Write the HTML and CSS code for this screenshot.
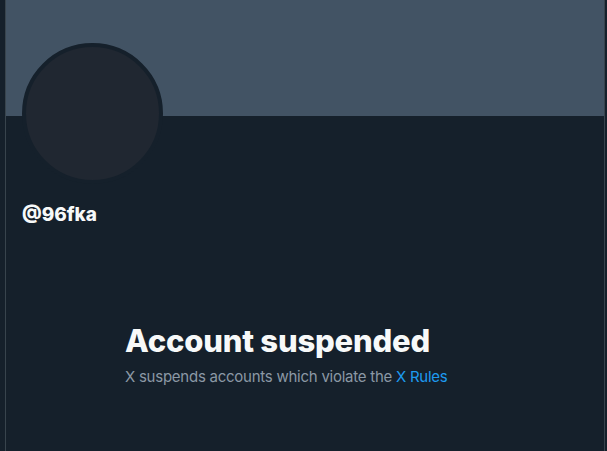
FILE: index.html
```html
<!DOCTYPE html>
<html lang="en">
<head>
    <meta charset="UTF-8">
    <meta name="viewport" content="width=device-width, initial-scale=1.0">
    <title>@96fka</title>
    <link rel="stylesheet" href="styles.css">
</head>
<body>
    <div class="column">
        <div class="banner"></div>
        <div class="profile">
            <div class="avatar"></div>
            <div class="handle">@96fka</div>
        </div>
        <div class="empty-state">
            <h1 class="title">Account suspended</h1>
            <p class="subtitle">X suspends accounts which violate the <a href="#">X Rules</a></p>
        </div>
    </div>
</body>
</html>
```

FILE: styles.css
```css
body {
    margin: 0;
    background: #15202b;
    font-family: Inter, "Noto Sans", sans-serif;
    color: #f7f9f9;
}
.column {
    width: 598px;
    height: 451px;
    margin-left: 5px;
    border-left: 1px solid #38444d;
    border-right: 1px solid #38444d;
    overflow: hidden;
}
.banner {
    height: 116px;
    background: #425364;
}
.profile {
    padding: 0 16px;
}
.avatar {
    width: 133px;
    height: 133px;
    margin-top: -73px;
    border: 4px solid #15202b;
    border-radius: 50%;
    background: #202731;
}
.handle {
    margin-top: 19px;
    font-size: 19px;
    font-weight: 800;
    line-height: 24px;
}
.empty-state {
    margin: 96px 0 0 119px;
    max-width: 336px;
}
.title {
    margin: 0;
    font-size: 31px;
    font-weight: 800;
    line-height: 36px;
    letter-spacing: -0.2px;
}
.subtitle {
    margin: 8px 0 0;
    font-size: 15px;
    line-height: 20px;
    letter-spacing: -0.25px;
    color: #8b98a5;
}
.subtitle a {
    color: #1d9bf0;
    text-decoration: none;
}
```
